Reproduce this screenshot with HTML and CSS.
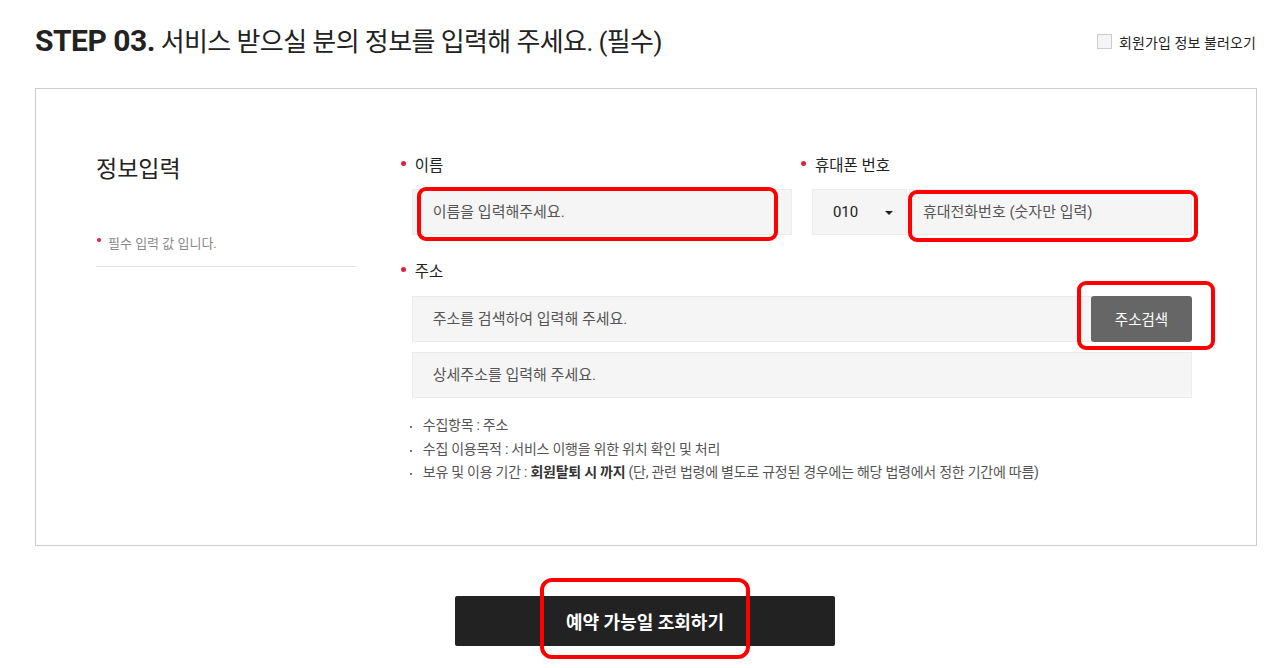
FILE: index.html
```html
<!DOCTYPE html>
<html lang="ko">
<head>
<meta charset="utf-8">
<link rel="stylesheet" href="styles.css">
</head>
<body>
<div class="page">
  <div class="head">
    <h2 class="title"><b>STEP 03.</b> 서비스 받으실 분의 정보를 입력해 주세요. (필수)</h2>
    <label class="load"><span class="chk"></span>회원가입 정보 불러오기</label>
  </div>
  <div class="box">
    <div class="side">
      <h3 class="side-title">정보입력</h3>
      <p class="req"><span class="dot"></span>필수 입력 값 입니다.</p>
    </div>
    <div class="form">
      <div class="row2">
        <div class="field">
          <div class="label"><span class="dot"></span>이름</div>
          <div class="input">이름을 입력해주세요.</div>
        </div>
        <div class="field">
          <div class="label"><span class="dot"></span>휴대폰 번호</div>
          <div class="phone">
            <div class="select">010<span class="caret"></span></div>
            <div class="input grow">휴대전화번호 (숫자만 입력)</div>
          </div>
        </div>
      </div>
      <div class="field addr">
        <div class="label"><span class="dot"></span>주소</div>
        <div class="addr-row">
          <div class="input grow">주소를 검색하여 입력해 주세요.</div>
          <div class="btn-search">주소검색</div>
        </div>
        <div class="input">상세주소를 입력해 주세요.</div>
      </div>
      <ul class="notes">
        <li>수집항목 : 주소</li>
        <li>수집 이용목적 : 서비스 이행을 위한 위치 확인 및 처리</li>
        <li>보유 및 이용 기간 : <strong>회원탈퇴 시 까지</strong> (단, 관련 법령에 별도로 규정된 경우에는 해당 법령에서 정한 기간에 따름)</li>
      </ul>
    </div>
  </div>
  <div class="actions">
    <div class="submit">예약 가능일 조회하기</div>
  </div>
</div>
<span class="mark m1"></span>
<span class="mark m2"></span>
<span class="mark m3"></span>
<span class="mark m4"></span>
</body>
</html>
```
FILE: styles.css
```css
* { box-sizing: border-box; }
html, body { margin: 0; padding: 0; background: #fff; }
body {
  font-family: Roboto, "Noto Sans CJK KR", sans-serif;
  color: #222;
  position: relative;
  width: 1268px;
  height: 668px;
  overflow: hidden;
}
.page { padding: 19px 11px 0 35px; }
.head {
  display: flex;
  justify-content: space-between;
  align-items: center;
  height: 40px;
}
.title {
  margin: 0;
  font-size: 26px;
  font-weight: 400;
  letter-spacing: -0.6px;
  color: #222;
}
.title b { font-size: 30px; font-weight: 700; letter-spacing: -0.5px; }
.load {
  display: flex;
  align-items: center;
  font-size: 14px;
  color: #222;
  margin-top: 5px;
  margin-right: 1px;
  letter-spacing: 0.1px;
}
.chk {
  width: 15px; height: 15px;
  border: 1px solid #ccc;
  background: #f5f5f5;
  margin-right: 7px;
}
.box {
  margin-top: 29px;
  border: 1px solid #ccc;
  height: 458px;
  display: flex;
  padding: 66px 64px 0 60px;
}
.side { width: 260px; }
.side-title {
  margin: 0;
  font-size: 23px;
  font-weight: 400;
  line-height: 30px;
  color: #222;
}
.req {
  margin: 48px 0 0;
  padding-bottom: 14px;
  border-bottom: 1px solid #e5e5e5;
  font-size: 13px;
  color: #888;
  display: flex;
  align-items: center;
}
.req .dot { margin-right: 7px; width: 4px; height: 4px; margin-left: 1px; position: relative; top: -3px; }
.form { margin-left: 56px; width: 781px; }
.row2 { display: flex; gap: 20px; }
.row2 .field { flex: 1; }
.label {
  display: flex;
  align-items: center;
  font-size: 15.5px;
  line-height: 20px;
  color: #222;
  height: 20px;
  margin-left: -11px;
  margin-bottom: 13px;
  margin-top: 1px;
}
.dot {
  display: inline-block;
  width: 5px; height: 5px;
  border-radius: 50%;
  background: #e0203a;
  margin-right: 9px;
  position: relative;
  top: -3px;
}
.input {
  height: 46px;
  background: #f5f5f5;
  border: 1px solid #ebebeb;
  font-size: 15px;
  color: #555;
  display: flex;
  align-items: center;
  padding-left: 20px;
  padding-bottom: 4px;
}
.grow { flex: 1; }
.phone { display: flex; gap: 2px; }
.phone .input { padding-left: 13px; padding-bottom: 4px; }
.select {
  width: 95px;
  height: 46px;
  background: #f5f5f5;
  border: 1px solid #ebebeb;
  font-size: 15px;
  color: #222;
  display: flex;
  align-items: center;
  padding-left: 20px;
  position: relative;
}
.caret {
  position: absolute;
  left: 72px; top: 21px;
  width: 0; height: 0;
  border-left: 4px solid transparent;
  border-right: 4px solid transparent;
  border-top: 4px solid #222;
}
.addr { margin-top: 27px; }
.addr .label { margin-bottom: 14px; }
.addr-row { display: flex; gap: 0; margin-bottom: 10px; }
.btn-search {
  width: 101px;
  height: 46px;
  background: #666;
  color: #fff;
  border-radius: 3px;
  font-size: 14.5px;
  display: flex;
  align-items: center;
  justify-content: center;
  margin-left: -1px;
  padding-bottom: 2px;
}
.notes {
  list-style: none;
  margin: 16px 0 0 -2px;
  padding: 0;
  font-size: 14px;
  color: #555;
  line-height: 23.5px;
}
.notes li { position: relative; padding-left: 13px; letter-spacing: -0.25px; }
.notes li::before {
  content: "";
  position: absolute;
  left: 0; top: 12px;
  width: 2px; height: 2px;
  background: #777;
}
.notes strong { color: #333; font-weight: 700; }
.actions {
  display: flex;
  justify-content: center;
  margin-top: 50px;
}
.submit {
  width: 380px;
  height: 50px;
  background: #222;
  color: #fff;
  font-size: 18px;
  font-weight: 700;
  display: flex;
  align-items: center;
  justify-content: center;
  border-radius: 2px;
  margin-left: -2px;
}
.mark {
  position: absolute;
  border: 4px solid #ff0000;
  border-radius: 9px;
  pointer-events: none;
}
.m1 { left: 417px; top: 187px; width: 361px; height: 54px; }
.m2 { left: 908px; top: 190px; width: 290px; height: 52px; }
.m3 { left: 1077px; top: 281px; width: 138px; height: 69px; }
.m4 { left: 540px; top: 578px; width: 210px; height: 81px; border-radius: 12px; }
```
